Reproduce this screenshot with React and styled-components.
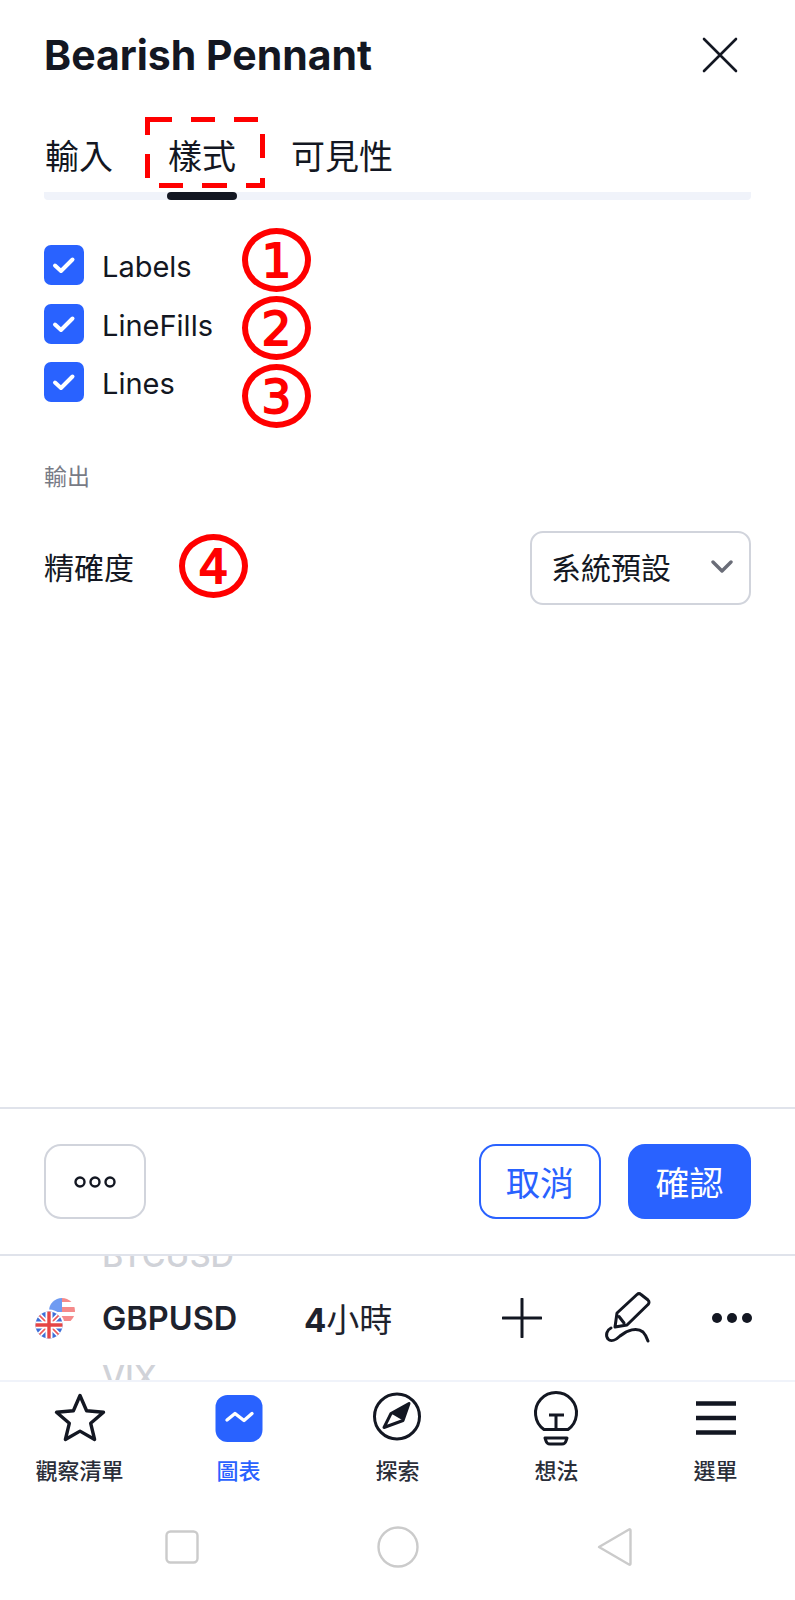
import React from "react";
import styled, { createGlobalStyle } from "styled-components";

const CJK = `"Inter", "Noto Sans CJK TC", sans-serif`;
const BLUE = "#2962ff";
const INK = "#131722";

const GlobalStyle = createGlobalStyle`
  html, body {
    margin: 0;
    padding: 0;
    background: #fff;
  }
  * {
    box-sizing: border-box;
  }
`;

const Page = styled.div`
  width: 795px;
  height: 1600px;
  display: flex;
  flex-direction: column;
  overflow: hidden;
  font-family: ${CJK};
  color: ${INK};
`;

const Sheet = styled.section`
  height: 1107px;
  padding: 0 44px;
  display: flex;
  flex-direction: column;
`;

const Header = styled.header`
  height: 110px;
  display: flex;
  align-items: center;
  justify-content: space-between;
`;

const Title = styled.h1`
  margin: 0;
  font-size: 41px;
  font-weight: 700;
`;

const CloseIcon = styled.svg`
  width: 36px;
  height: 36px;
  margin-right: 13px;
`;

const Tabs = styled.nav`
  position: relative;
  height: 90px;
  display: flex;
  align-items: flex-start;
  gap: 55px;
  padding: 25px 1px 0;
  border-bottom: 8px solid #f0f3fa;
  border-radius: 0 0 4px 4px;
`;

const Tab = styled.span`
  position: relative;
  font-size: 34px;
  line-height: 44px;
`;

const ActiveBar = styled.i`
  position: absolute;
  left: -1px;
  right: -1px;
  top: 57px;
  height: 8px;
  border-radius: 4px;
  background: ${INK};
`;

const DashedMark = styled.svg`
  position: absolute;
  left: -25px;
  top: -20px;
  width: 124px;
  height: 75px;
`;

const OptionList = styled.div`
  margin-top: 45px;
  display: flex;
  flex-direction: column;
  gap: 18.5px;
`;

const OptionRow = styled.label`
  height: 40px;
  display: flex;
  align-items: center;
  gap: 18px;
  font-size: 29px;
`;

const OptionText = styled.span`
  padding-top: 3px;
`;

const CheckBox = styled.span`
  width: 40px;
  height: 40px;
  border-radius: 7px;
  background: ${BLUE};
  display: flex;
  align-items: center;
  justify-content: center;
`;

const Mark = styled.span`
  position: relative;
  display: inline-flex;
  align-items: center;
  justify-content: center;
  width: 69px;
  height: 64px;
  border: 6px solid #ff0000;
  border-radius: 50%;
  color: #ff0000;
  font-family: "DejaVu Sans", sans-serif;
  font-size: 47px;
  line-height: 1;
  -webkit-text-stroke: 1.8px #ff0000;
`;

const OptionMark = styled(Mark)`
  position: absolute;
  left: ${(p) => p.$left}px;
  top: ${(p) => p.$top}px;
`;

const SectionLabel = styled.div`
  margin-top: 58px;
  font-size: 23px;
  line-height: 34px;
  color: #787b86;
`;

const PrecisionRow = styled.div`
  margin-top: 33px;
  display: flex;
  align-items: center;
  gap: 45px;
  font-size: 30px;
`;

const Select = styled.div`
  margin: 4px 0 0 auto;
  width: 221px;
  height: 74px;
  padding: 0 16px 4px 19px;
  display: flex;
  align-items: center;
  justify-content: space-between;
  border: 2px solid #d1d4dc;
  border-radius: 13px;
  font-size: 30px;
`;

const ActionBar = styled.div`
  height: 149px;
  padding: 35px 44px 0;
  display: flex;
  align-items: flex-start;
  gap: 27px;
  border-top: 2px solid #e0e3eb;
  border-bottom: 2px solid #e0e3eb;
`;

const Button = styled.button`
  height: 75px;
  width: ${(p) => p.$w}px;
  padding: 0;
  display: flex;
  align-items: center;
  justify-content: center;
  border-radius: 17px;
  border: 2px solid ${(p) => (p.$kind === "ghost" ? "#d1d4dc" : BLUE)};
  background: ${(p) => (p.$kind === "solid" ? BLUE : "#fff")};
  color: ${(p) => (p.$kind === "solid" ? "#fff" : BLUE)};
  font-family: ${CJK};
  font-size: 34px;
`;

const MoreButton = styled(Button)`
  margin-right: auto;
`;

const SymbolBar = styled.div`
  position: relative;
  height: 126px;
  padding: 0 42px 0 35px;
  display: flex;
  align-items: center;
  overflow: hidden;
  border-bottom: 2px solid #f0f3fa;
`;

const GhostSymbol = styled.span`
  position: absolute;
  left: 102px;
  top: ${(p) => p.$top}px;
  font-size: 32.5px;
  font-weight: 500;
  line-height: 36px;
  color: #d0d2d8;
`;

const Symbol = styled.strong`
  width: 202px;
  font-size: 32.5px;
  font-weight: 600;
  color: #1e222d;
`;

const Interval = styled.span`
  width: 198px;
  font-size: 33px;
  font-weight: 400;
  color: #1e222d;
`;

const IntervalNumber = styled.b`
  font-weight: 700;
`;

const BarTools = styled.div`
  flex: 1;
  display: flex;
  align-items: center;
  justify-content: space-between;
`;

const FlagIcon = styled.svg`
  width: 67px;
  height: 42px;
  margin-top: 2px;
`;

const PenSvg = styled.svg`
  width: 50px;
  height: 54px;
  margin: -2px 0 0 2px;
`;

const TabBar = styled.nav`
  display: grid;
  grid-template-columns: repeat(5, 159px);
`;

const TabItem = styled.div`
  height: 112px;
  padding-top: 12px;
  display: flex;
  flex-direction: column;
  align-items: center;
  font-size: 22px;
  line-height: 32px;
  font-weight: 500;
  color: ${(p) => (p.$active ? BLUE : "#2a2e39")};
`;

const TabIcon = styled.svg`
  width: 54px;
  height: 54px;
  margin-bottom: 7px;
  overflow: visible;
`;

const SystemBar = styled.div`
  flex: 1;
  display: grid;
  grid-template-columns: repeat(3, 216px);
  justify-content: center;
  justify-items: center;
  padding-top: 31px;
`;

const SystemIcon = styled.svg`
  width: 44px;
  height: 44px;
  fill: none;
  stroke: #cbcbcb;
  stroke-width: 2.4;
  stroke-linejoin: round;
`;

const options = [
  { label: "Labels", mark: "1", top: 228 },
  { label: "LineFills", mark: "2", top: 296 },
  { label: "Lines", mark: "3", top: 364 },
];

const Check = () => (
  <svg width="26" height="26" viewBox="0 0 26 26">
    <path d="M4 13.500l6 5.500L21.500 7.500" fill="none" stroke="#fff" strokeWidth="4" strokeLinecap="round" strokeLinejoin="round" />
  </svg>
);

const Flags = () => (
  <FlagIcon viewBox="0 0 67 42">
    <defs>
      <clipPath id="us">
        <circle cx="27" cy="13" r="13" />
      </clipPath>
      <clipPath id="uk">
        <circle cx="14" cy="27" r="13.500" />
      </clipPath>
    </defs>
    <g clipPath="url(#us)">
      <rect x="13" width="28" height="27" fill="#fff" />
      <rect x="14" width="13" height="14" fill="#6f9bf2" />
      <rect x="27" y="0" width="14" height="4" fill="#f58a8a" />
      <rect x="27" y="9" width="14" height="5" fill="#f58a8a" />
      <rect x="14" y="18" width="27" height="5" fill="#f58a8a" />
    </g>
    <circle cx="14" cy="27" r="15.500" fill="#fff" />
    <g clipPath="url(#uk)">
      <rect y="13" width="28" height="28" fill="#3f6fd8" />
      <path d="M0 13l28 28M28 13L0 41" stroke="#fff" strokeWidth="5" />
      <path d="M0 13l28 28M28 13L0 41" stroke="#ec5a5a" strokeWidth="1.600" />
      <path d="M14 13v28M0 27h28" stroke="#fff" strokeWidth="7" />
      <path d="M14 13v28M0 27h28" stroke="#e64545" strokeWidth="3.400" />
    </g>
  </FlagIcon>
);

const PlusIcon = () => (
  <svg width="40" height="40" viewBox="0 0 40 40">
    <path d="M20 1v38M1 20h38" stroke={INK} strokeWidth="3" strokeLinecap="round" />
  </svg>
);

const PenIcon = () => (
  <PenSvg viewBox="0 0 50 54" fill="none" stroke={INK} strokeWidth="3" strokeLinejoin="round" strokeLinecap="round">
    <path d="M34 4.500a3 3 0 0 1 4 0L45 10a3 3 0 0 1 0 4.500L24 35 12 37 14 23z" />
    <path d="M16 26.500L21 33" />
    <path d="M8 38C4 40 2 45 5 49c3 3 8 1 12-3C24 40 34 37 40 42c3 3 4 6 5 9" />
  </PenSvg>
);

const DotsIcon = () => (
  <svg width="42" height="12" viewBox="0 0 42 12">
    <circle cx="6" cy="6" r="5" fill={INK} />
    <circle cx="21" cy="6" r="5" fill={INK} />
    <circle cx="36" cy="6" r="5" fill={INK} />
  </svg>
);

const StarIcon = () => (
  <TabIcon viewBox="0 0 54 54">
    <path d="M27 1.500l6.600 15.200 16.900 1.600-12.800 11 3.900 16.200L27 37.100 12.400 45.500l3.900-16.200-12.800-11 16.900-1.600z" fill="none" stroke={INK} strokeWidth="3.400" strokeLinejoin="round" />
  </TabIcon>
);

const ChartIcon = () => (
  <TabIcon viewBox="0 0 54 54">
    <rect x="3.500" y="1" width="47" height="47" rx="12" fill={BLUE} />
    <path d="M15 26l8-6.500 9 7 8-7" fill="none" stroke="#fff" strokeWidth="3.400" strokeLinecap="round" strokeLinejoin="round" />
  </TabIcon>
);

const CompassIcon = () => (
  <TabIcon viewBox="0 0 54 54">
    <circle cx="26" cy="22.500" r="22.500" fill="none" stroke={INK} strokeWidth="3" />
    <path d="M38 9.500L20 19.500 13 33.500 32 26.500z" fill="none" stroke={INK} strokeWidth="3" strokeLinejoin="round" />
    <path d="M38 9.500L20 19.500 32 26.500z" fill={INK} />
  </TabIcon>
);

const BulbIcon = () => (
  <TabIcon viewBox="0 0 54 54">
    <g fill="none" stroke={INK} strokeWidth="3" strokeLinejoin="round" transform="translate(-1 1)">
      <path d="M15 34.500A20.500 20.500 0 1 1 39 34.500z" />
      <path d="M20 20h15M27 20v14" />
      <path d="M16 43h22l-1 3c-.500 2-2 3-4 3H21c-2 0-3.500-1-4-3z" />
    </g>
  </TabIcon>
);

const MenuIcon = () => (
  <TabIcon viewBox="0 0 54 54">
    <path d="M7 9.500h40M7 24h40M7 38.500h40" stroke={INK} strokeWidth="4.400" />
  </TabIcon>
);

const navItems = [
  { label: "觀察清單", icon: <StarIcon /> },
  { label: "圖表", icon: <ChartIcon />, active: true },
  { label: "探索", icon: <CompassIcon /> },
  { label: "想法", icon: <BulbIcon /> },
  { label: "選單", icon: <MenuIcon /> },
];

export default function App() {
  return (
    <Page lang="zh-TW">
      <GlobalStyle />
      <Sheet>
        <Header>
          <Title>Bearish Pennant</Title>
          <CloseIcon viewBox="0 0 36 36">
            <path d="M2 2l32 32M34 2L2 34" stroke={INK} strokeWidth="2.600" strokeLinecap="round" />
          </CloseIcon>
        </Header>
        <Tabs>
          <Tab>輸入</Tab>
          <Tab>
            樣式
            <DashedMark viewBox="0 0 124 75">
              <path d="M4.500 20V4.500H29M48 4.500H72M91 4.500H115M119.500 19V43M4.500 39V63M16 70.500H40M59 70.500H84M103 70.500H119.500V63" fill="none" stroke="#ff0000" strokeWidth="5" />
            </DashedMark>
            <ActiveBar />
          </Tab>
          <Tab>可見性</Tab>
        </Tabs>
        <OptionList>
          {options.map((o) => (
            <OptionRow key={o.label}>
              <CheckBox>
                <Check />
              </CheckBox>
              <OptionText>{o.label}</OptionText>
              <OptionMark $left={242} $top={o.top}>
                {o.mark}
              </OptionMark>
            </OptionRow>
          ))}
        </OptionList>
        <SectionLabel>輸出</SectionLabel>
        <PrecisionRow>
          精確度
          <Mark>4</Mark>
          <Select>
            系統預設
            <svg width="22" height="13" viewBox="0 0 22 13">
              <path d="M2 2l9 9 9-9" fill="none" stroke="#6a6d78" strokeWidth="3.400" strokeLinecap="round" strokeLinejoin="round" />
            </svg>
          </Select>
        </PrecisionRow>
      </Sheet>
      <ActionBar>
        <MoreButton $w={102} $kind="ghost">
          <svg width="44" height="14" viewBox="0 0 44 14">
            <circle cx="7" cy="7" r="4.500" fill="none" stroke={INK} strokeWidth="2.400" />
            <circle cx="22" cy="7" r="4.500" fill="none" stroke={INK} strokeWidth="2.400" />
            <circle cx="37" cy="7" r="4.500" fill="none" stroke={INK} strokeWidth="2.400" />
          </svg>
        </MoreButton>
        <Button $w={122}>取消</Button>
        <Button $w={123} $kind="solid">確認</Button>
      </ActionBar>
      <SymbolBar>
        <GhostSymbol $top={-18}>BTCUSD</GhostSymbol>
        <GhostSymbol $top={104}>VIX</GhostSymbol>
        <Flags />
        <Symbol>GBPUSD</Symbol>
        <Interval>
          <IntervalNumber>4</IntervalNumber>小時
        </Interval>
        <BarTools>
          <PlusIcon />
          <PenIcon />
          <DotsIcon />
        </BarTools>
      </SymbolBar>
      <TabBar>
        {navItems.map((n) => (
          <TabItem key={n.label} $active={n.active}>
            {n.icon}
            {n.label}
          </TabItem>
        ))}
      </TabBar>
      <SystemBar>
        <SystemIcon viewBox="0 0 44 44">
          <rect x="6.500" y="6.500" width="31" height="31" rx="4" />
        </SystemIcon>
        <SystemIcon viewBox="0 0 44 44">
          <circle cx="22" cy="22" r="19.500" />
        </SystemIcon>
        <SystemIcon viewBox="0 0 44 44">
          <path d="M7 22L37 4.500c1-.500 1.500 0 1.500 1v33c0 1-.500 1.500-1.500 1z" />
        </SystemIcon>
      </SystemBar>
    </Page>
  );
}
